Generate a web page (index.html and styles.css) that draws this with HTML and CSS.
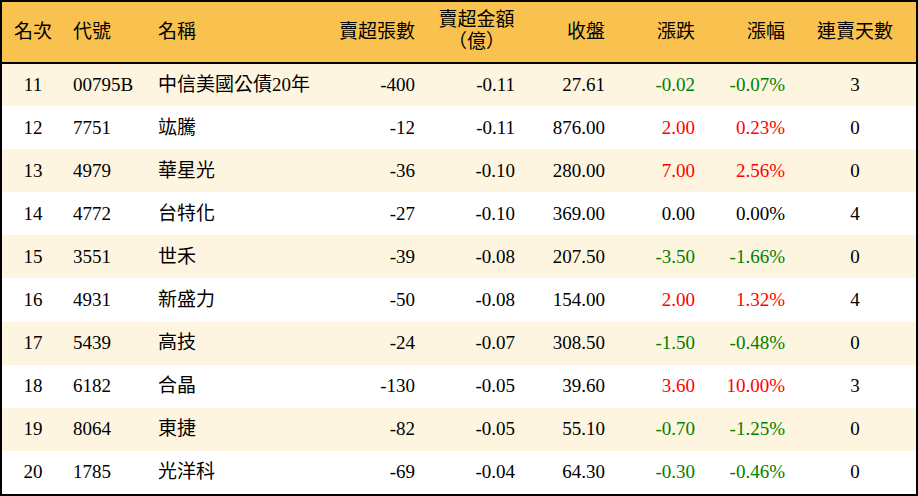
FILE: index.html
```html
<!DOCTYPE html>
<html lang="zh-Hant">
<head>
<meta charset="utf-8">
<title>賣超排行</title>
<link rel="stylesheet" href="styles.css">
</head>
<body>
<div class="frame">
<table class="rank">
  <colgroup>
    <col class="c-rank"><col class="c-code"><col class="c-name"><col class="c-vol"><col class="c-amt">
    <col class="c-close"><col class="c-chg"><col class="c-pct"><col class="c-days">
  </colgroup>
  <thead>
    <tr class="head">
      <th class="center">名次</th>
      <th class="left">代號</th>
      <th class="left">名稱</th>
      <th class="right">賣超張數</th>
      <th class="amt">賣超金額<br>（億）</th>
      <th class="right">收盤</th>
      <th class="right">漲跌</th>
      <th class="right">漲幅</th>
      <th class="center">連賣天數</th>
    </tr>
  </thead>
  <tbody>
    <tr class="odd"><td class="center">11</td><td class="left">00795B</td><td class="left">中信美國公債20年</td><td class="right">-400</td><td class="right">-0.11</td><td class="right">27.61</td><td class="right down">-0.02</td><td class="right down">-0.07%</td><td class="center">3</td></tr>
    <tr><td class="center">12</td><td class="left">7751</td><td class="left">竑騰</td><td class="right">-12</td><td class="right">-0.11</td><td class="right">876.00</td><td class="right up">2.00</td><td class="right up">0.23%</td><td class="center">0</td></tr>
    <tr class="odd"><td class="center">13</td><td class="left">4979</td><td class="left">華星光</td><td class="right">-36</td><td class="right">-0.10</td><td class="right">280.00</td><td class="right up">7.00</td><td class="right up">2.56%</td><td class="center">0</td></tr>
    <tr><td class="center">14</td><td class="left">4772</td><td class="left">台特化</td><td class="right">-27</td><td class="right">-0.10</td><td class="right">369.00</td><td class="right">0.00</td><td class="right">0.00%</td><td class="center">4</td></tr>
    <tr class="odd"><td class="center">15</td><td class="left">3551</td><td class="left">世禾</td><td class="right">-39</td><td class="right">-0.08</td><td class="right">207.50</td><td class="right down">-3.50</td><td class="right down">-1.66%</td><td class="center">0</td></tr>
    <tr><td class="center">16</td><td class="left">4931</td><td class="left">新盛力</td><td class="right">-50</td><td class="right">-0.08</td><td class="right">154.00</td><td class="right up">2.00</td><td class="right up">1.32%</td><td class="center">4</td></tr>
    <tr class="odd"><td class="center">17</td><td class="left">5439</td><td class="left">高技</td><td class="right">-24</td><td class="right">-0.07</td><td class="right">308.50</td><td class="right down">-1.50</td><td class="right down">-0.48%</td><td class="center">0</td></tr>
    <tr><td class="center">18</td><td class="left">6182</td><td class="left">合晶</td><td class="right">-130</td><td class="right">-0.05</td><td class="right">39.60</td><td class="right up">3.60</td><td class="right up">10.00%</td><td class="center">3</td></tr>
    <tr class="odd"><td class="center">19</td><td class="left">8064</td><td class="left">東捷</td><td class="right">-82</td><td class="right">-0.05</td><td class="right">55.10</td><td class="right down">-0.70</td><td class="right down">-1.25%</td><td class="center">0</td></tr>
    <tr><td class="center">20</td><td class="left">1785</td><td class="left">光洋科</td><td class="right">-69</td><td class="right">-0.04</td><td class="right">64.30</td><td class="right down">-0.30</td><td class="right down">-0.46%</td><td class="center">0</td></tr>
  </tbody>
</table>
</div>
</body>
</html>
```

FILE: styles.css
```css
html, body {
  margin: 0;
  padding: 0;
  background: #ffffff;
}

.frame {
  box-sizing: border-box;
  width: 918px;
  height: 496px;
  border: 2px solid #000000;
  background: #ffffff;
  overflow: hidden;
}

.rank {
  width: 914px;
  height: 492px;
  table-layout: fixed;
  border-collapse: collapse;
  font-family: "Liberation Serif", "Noto Sans CJK TC", serif;
  font-size: 19px;
  color: #000000;
}

.c-rank { width: 62px; }
.c-code { width: 85px; }
.c-name { width: 181px; }
.c-vol { width: 94px; }
.c-amt { width: 100px; }
.c-close { width: 90px; }
.c-chg { width: 90px; }
.c-pct { width: 90px; }
.c-days { width: 122px; }

.head {
  height: 61px;
}

.head th {
  background: #f9c24e;
  border-bottom: 2px solid #000000;
  font-weight: normal;
  line-height: 22px;
  padding: 0 9px;
  white-space: nowrap;
}

.head th.amt {
  text-align: center;
  padding: 0 7px 2px 12px;
}

tbody tr {
  height: 43px;
}

tbody tr.odd td {
  background: #fef5e0;
}

td {
  padding: 0 9px;
  line-height: 22px;
  white-space: nowrap;
  vertical-align: middle;
}

.left { text-align: left; }
.right { text-align: right; }
.center { text-align: center; padding-left: 0; padding-right: 0; }

.up { color: #ff0000; }
.down { color: #008000; }
```
